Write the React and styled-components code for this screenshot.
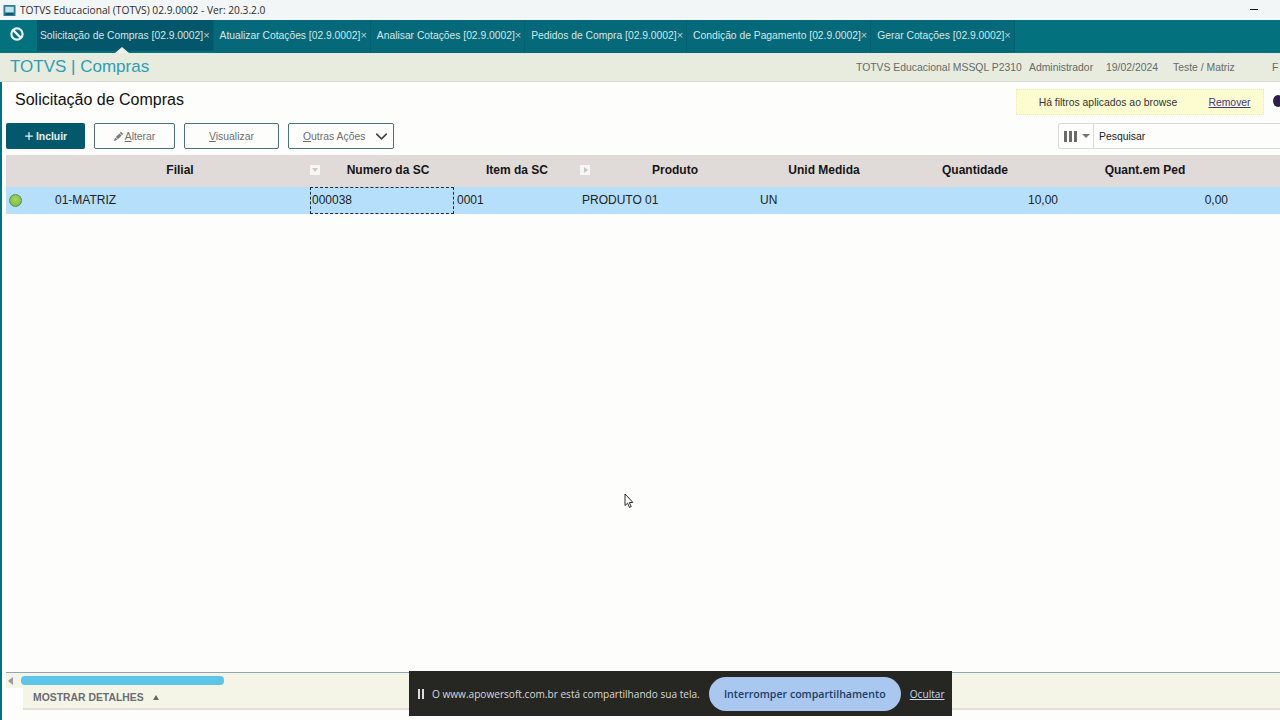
import React from "react";
import styled, { createGlobalStyle } from "styled-components";
import { BsPencilFill } from "react-icons/bs";
import { FaPlus } from "react-icons/fa6";
import { IoChevronDown } from "react-icons/io5";

const Global = createGlobalStyle`
  html, body { margin: 0; padding: 0; height: 100%; overflow: hidden; background: #fdfdfb; }
  #root { height: 100%; }
  * { box-sizing: border-box; }
`;

const tabs = [
  { label: "Solicitação de Compras [02.9.0002]", width: 172, active: true, pad: 6 },
  { label: "Atualizar Cotações [02.9.0002]", width: 153, pad: 2 },
  { label: "Analisar Cotações [02.9.0002]", width: 150, pad: 0 },
  { label: "Pedidos de Compra [02.9.0002]", width: 158, pad: 0 },
  { label: "Condição de Pagamento [02.9.0002]", width: 178, pad: 0 },
  { label: "Gerar Cotações [02.9.0002]", width: 139, pad: 0 },
];

const columns = [
  { label: "", width: 44 },
  { label: "Filial", width: 260 },
  { label: "Numero da SC", width: 144, shift: 12, sort: "down" },
  { label: "Item da SC", width: 126 },
  { label: "Produto", width: 178, shift: 12, sort: "right" },
  { label: "Unid Medida", width: 132 },
  { label: "Quantidade", width: 170 },
  { label: "Quant.em Ped", width: 170 },
];

const App = () => {
  return (
    <React.Fragment>
      <Global />
      <Page>
        <TitleBar>
          <AppIcon viewBox="0 0 14 14">
            <rect x="0.5" y="1" width="13" height="12" rx="1" fill="#2f7f97" />
            <rect x="2.5" y="3" width="9" height="6" fill="#bfe3ea" />
            <rect x="2.5" y="10" width="9" height="1.5" fill="#123f52" />
          </AppIcon>
          <TitleText>TOTVS Educacional (TOTVS) 02.9.0002 - Ver: 20.3.2.0</TitleText>
          <WindowMinimize />
        </TitleBar>

        <TabBar>
          <HomeIcon viewBox="0 0 16 16">
            <circle cx="8" cy="8" r="5.6" fill="none" stroke="#eef6f5" strokeWidth="2.2" />
            <path d="M4.4 4.4 L11.6 11.6" stroke="#eef6f5" strokeWidth="2.2" />
          </HomeIcon>
          {tabs.map((tab) => (
            <Tab key={tab.label} $width={tab.width} $active={tab.active} $pad={tab.pad}>
              <TabLabel>{tab.label}</TabLabel>
              <TabClose>×</TabClose>
            </Tab>
          ))}
        </TabBar>

        <InfoBar>
          <Brand>TOTVS | Compras</Brand>
          <InfoItems>
            <InfoItem $width={173}>TOTVS Educacional MSSQL P2310</InfoItem>
            <InfoItem $width={77}>Administrador</InfoItem>
            <InfoItem $width={67}>19/02/2024</InfoItem>
            <InfoItem $width={99}>Teste / Matriz</InfoItem>
            <InfoItem $width={8}>F</InfoItem>
          </InfoItems>
        </InfoBar>

        <Body>
          <Stripe />
          <Main>
            <TitleRow>
              <PageTitle>Solicitação de Compras</PageTitle>
              <FilterNotice>
                <FilterText>Há filtros aplicados ao browse</FilterText>
                <RemoveLink>Remover</RemoveLink>
              </FilterNotice>
              <CutDot />
            </TitleRow>

            <Toolbar>
              <PrimaryButton>
                <FaPlus size={10} />
                <span>Incluir</span>
              </PrimaryButton>
              <ActionButton $width={81}>
                <BsPencilFill size={9} color="#777" />
                <span><u>A</u>lterar</span>
              </ActionButton>
              <ActionButton $width={95}>
                <span><u>V</u>isualizar</span>
              </ActionButton>
              <ActionButton $width={106} $between>
                <span><u>O</u>utras Ações</span>
                <IoChevronDown size={17} color="#444" />
              </ActionButton>
              <SearchBox>
                <ColumnsButton>
                  <ColumnBars>
                    <i /><i /><i />
                  </ColumnBars>
                  <Caret />
                </ColumnsButton>
                <SearchInput placeholder="Pesquisar" />
              </SearchBox>
            </Toolbar>

            <HeaderRow>
              {columns.map((col) => (
                <HeadCell key={col.label + col.width} $width={col.width} $shift={col.shift}>
                  {col.sort && <SortMark $dir={col.sort} />}
                  {col.label}
                </HeadCell>
              ))}
            </HeaderRow>

            <DataRow>
              <StatusCell><StatusDot /></StatusCell>
              <DataCell $width={260} $pad={5}>01-MATRIZ</DataCell>
              <FocusCell>000038</FocusCell>
              <DataCell $width={126} $pad={3}>0001</DataCell>
              <DataCell $width={178} $pad={2}>PRODUTO 01</DataCell>
              <DataCell $width={132} $pad={2}>UN</DataCell>
              <DataCell $width={170} $right $pad={2}>10,00</DataCell>
              <DataCell $width={170} $right $pad={2}>0,00</DataCell>
            </DataRow>

            <Spacer />

            <Cursor viewBox="0 0 10 16">
              <path d="M1 1 L1 12.5 L3.6 10.2 L5.4 14.4 L7.2 13.6 L5.4 9.6 L8.8 9.4 Z" fill="#fff" stroke="#111" strokeWidth="0.9" />
            </Cursor>

            <ScrollRow>
              <ScrollArrow />
              <ScrollThumb />
            </ScrollRow>
            <DetailsBar>
              <DetailsLabel>MOSTRAR DETALHES</DetailsLabel>
              <DetailsCaret />
            </DetailsBar>
          </Main>
        </Body>

        <ShareBar>
          <PauseMark />
          <ShareText>O www.apowersoft.com.br está compartilhando sua tela.</ShareText>
          <StopButton>Interromper compartilhamento</StopButton>
          <HideLink>Ocultar</HideLink>
        </ShareBar>
      </Page>
    </React.Fragment>
  );
};

const Page = styled.div`
  position: relative;
  display: flex;
  flex-direction: column;
  width: 1280px;
  height: 720px;
  overflow: hidden;
  font-family: "Liberation Sans", Arial, sans-serif;
  background: #fdfdfb;
`;

const TitleBar = styled.div`
  display: flex;
  align-items: center;
  flex: 0 0 20px;
  padding: 0 22px 0 3px;
  background: #f3f6f6;
`;

const AppIcon = styled.svg`
  width: 13px;
  height: 13px;
  margin-right: 4px;
`;

const TitleText = styled.span`
  flex: 1;
  font-family: "Open Sans", sans-serif;
  font-size: 10.2px;
  color: #2b2b2b;
  white-space: nowrap;
`;

const WindowMinimize = styled.span`
  width: 8px;
  height: 1px;
  margin-bottom: 1px;
  background: #111;
`;

const TabBar = styled.div`
  display: flex;
  align-items: stretch;
  flex: 0 0 33px;
  padding-left: 2px;
  background: #04717f;
`;

const HomeIcon = styled.svg`
  flex: 0 0 16px;
  width: 16px;
  height: 16px;
  margin: 6px 12px 0 7px;
`;

const Tab = styled.div`
  position: relative;
  display: flex;
  align-items: center;
  justify-content: space-between;
  flex: 0 0 ${(p) => p.$width}px;
  height: ${(p) => (p.$active ? "31px" : "100%")};
  padding: ${(p) => (p.$active ? "0 3px 0 3px" : "0 3px 2px 6px")};
  background: ${(p) => (p.$active ? "#04566b" : "#05697a")};
  border-right: 1px solid #04606f;

  ${(p) =>
    p.$active &&
    `
    &::after {
      content: "";
      position: absolute;
      left: 78px;
      bottom: -2px;
      border-left: 7px solid transparent;
      border-right: 7px solid transparent;
      border-bottom: 6px solid #eef2ea;
    }
  `}
`;

const TabLabel = styled.span`
  font-size: 10.3px;
  color: #d6e6e6;
  white-space: nowrap;
`;

const TabClose = styled.span`
  font-size: 11px;
  line-height: 1;
  color: #b5d0d2;
`;

const InfoBar = styled.div`
  display: flex;
  align-items: center;
  justify-content: space-between;
  flex: 0 0 29px;
  padding: 0 0 0 10px;
  background: #e7ecdf;
  border-bottom: 1px solid #d8dad8;
`;

const Brand = styled.div`
  font-size: 17px;
  color: #2f9db5;
`;

const InfoItems = styled.div`
  display: flex;
  transform: translateX(0);
`;

const InfoItem = styled.span`
  flex: 0 0 ${(p) => p.$width}px;
  font-size: 10.4px;
  color: #666a68;
  white-space: nowrap;
`;

const Body = styled.div`
  display: flex;
  flex: 1;
  min-height: 0;
`;

const Stripe = styled.div`
  flex: 0 0 2px;
  background: #04717f;
`;

const Main = styled.div`
  position: relative;
  display: flex;
  flex-direction: column;
  flex: 1;
  min-width: 0;
  padding-left: 4px;
`;

const TitleRow = styled.div`
  display: flex;
  align-items: flex-start;
  flex: 0 0 41px;
  padding: 7px 0 0 9px;
`;

const PageTitle = styled.h1`
  flex: 1;
  margin: 0;
  font-size: 16px;
  line-height: 21px;
  font-weight: 400;
  color: #111;
`;

const FilterNotice = styled.div`
  display: flex;
  align-items: center;
  width: 248px;
  height: 26px;
  background: #fdfcd0;
  border: 1px dotted #ecebb5;
`;

const FilterText = styled.span`
  flex: 0 0 179px;
  text-align: center;
  padding-left: 3px;
  font-size: 10.4px;
  color: #333;
`;

const RemoveLink = styled.a`
  flex: 1;
  text-align: center;
  font-size: 10.4px;
  color: #3a3a8c;
  text-decoration: underline;
`;

const CutDot = styled.span`
  width: 10px;
  height: 12px;
  margin: 6px -3px 0 9px;
  border-radius: 50%;
  background: #2d1f4e;
`;

const Toolbar = styled.div`
  display: flex;
  align-items: center;
  flex: 0 0 26px;
  margin-bottom: 6px;
  gap: 9px;
`;

const PrimaryButton = styled.div`
  display: flex;
  align-items: center;
  justify-content: center;
  gap: 2px;
  width: 79px;
  height: 26px;
  border-radius: 2px;
  background: #04586c;
  color: #e6f1f2;
  font-size: 10.4px;
  font-weight: 700;
`;

const ActionButton = styled.div`
  display: flex;
  align-items: center;
  justify-content: ${(p) => (p.$between ? "space-between" : "center")};
  gap: 2px;
  width: ${(p) => p.$width}px;
  height: 26px;
  padding: ${(p) => (p.$between ? "0 3px 0 14px" : "0")};
  border: 1px solid #4d7279;
  border-radius: 2px;
  background: #fdfdfb;
  color: #6d6f70;
  font-size: 10.4px;
`;

const SearchBox = styled.div`
  display: flex;
  align-items: center;
  height: 26px;
  margin-left: auto;
  width: 223px;
  margin-right: -1px;
  border: 1px solid #dcdcdc;
  border-right: none;
  border-radius: 3px 0 0 3px;
`;

const ColumnsButton = styled.div`
  display: flex;
  align-items: center;
  gap: 5px;
  width: 35px;
  height: 100%;
  padding-left: 5px;
  border-right: 1px solid #dcdcdc;
`;

const ColumnBars = styled.div`
  display: flex;
  gap: 2px;

  i {
    display: block;
    width: 3px;
    height: 11px;
    background: #6a6a6a;
  }
`;

const Caret = styled.span`
  border-left: 4px solid transparent;
  border-right: 4px solid transparent;
  border-top: 4px solid #777;
`;

const SearchInput = styled.input`
  flex: 1;
  min-width: 0;
  height: 100%;
  padding: 0 0 0 5px;
  border: none;
  outline: none;
  background: transparent;
  font-family: "Liberation Sans", Arial, sans-serif;
  font-size: 10.4px;

  &::placeholder {
    color: #222;
    opacity: 1;
  }
`;

const HeaderRow = styled.div`
  display: flex;
  flex: 0 0 32px;
  background: #e0dbd9;
`;

const HeadCell = styled.div`
  position: relative;
  flex: 0 0 ${(p) => p.$width}px;
  padding-left: ${(p) => p.$shift || 0}px;
  text-align: center;
  font-size: 12px;
  line-height: 30px;
  font-weight: 700;
  color: #151515;
  white-space: nowrap;
`;

const SortMark = styled.span`
  position: absolute;
  left: ${(p) => (p.$dir === "down" ? "0" : "0")};
  top: 10px;
  width: 10px;
  height: 10px;
  background: #f6f6f2;

  &::after {
    content: "";
    position: absolute;
    ${(p) =>
      p.$dir === "down"
        ? `
      left: 2px;
      top: 3px;
      border-left: 3px solid transparent;
      border-right: 3px solid transparent;
      border-top: 4px solid #c9c9c9;
    `
        : `
      left: 4px;
      top: 2px;
      border-top: 3px solid transparent;
      border-bottom: 3px solid transparent;
      border-left: 4px solid #c4c4d2;
    `}
  }
`;

const DataRow = styled.div`
  display: flex;
  align-items: stretch;
  flex: 0 0 27px;
  background: #b6dffb;
`;

const StatusCell = styled.div`
  display: flex;
  align-items: center;
  flex: 0 0 44px;
  padding-left: 3px;
`;

const StatusDot = styled.span`
  width: 13px;
  height: 13px;
  border-radius: 50%;
  border: 1px solid #5f8f57;
  background: radial-gradient(circle at 50% 40%, #a7da5c, #6db33f);
`;

const DataCell = styled.div`
  flex: 0 0 ${(p) => p.$width}px;
  padding: 0 ${(p) => (p.$right ? p.$pad : 0)}px 0 ${(p) => (p.$right ? 0 : p.$pad)}px;
  text-align: ${(p) => (p.$right ? "right" : "left")};
  font-size: 12px;
  line-height: 26px;
  color: #222;
`;

const FocusCell = styled.div`
  flex: 0 0 144px;
  padding-left: 1px;
  border: 1px dashed #20303a;
  font-size: 12px;
  line-height: 25px;
  color: #222;
`;

const Spacer = styled.div`
  flex: 1;
`;

const Cursor = styled.svg`
  position: absolute;
  left: 622px;
  top: 411px;
  width: 10px;
  height: 16px;
`;

const ScrollRow = styled.div`
  display: flex;
  align-items: center;
  flex: 0 0 16px;
  padding-left: 2px;
  border-top: 1px solid #8fa4b5;
  background: #f4f5e6;
`;

const ScrollArrow = styled.span`
  margin-right: 8px;
  border-top: 4px solid transparent;
  border-bottom: 4px solid transparent;
  border-right: 5px solid #9b9b9b;
`;

const ScrollThumb = styled.span`
  width: 203px;
  height: 9px;
  border-radius: 4px;
  background: #5cc6e8;
`;

const DetailsBar = styled.div`
  display: flex;
  align-items: center;
  flex: 0 0 22px;
  margin: 0 0 10px 17px;
  padding: 0 0 1px 10px;
  background: #f4f5e6;
  border-bottom: 2px solid #dfe0d6;
`;

const DetailsLabel = styled.span`
  font-size: 10.4px;
  font-weight: 700;
  color: #6c6c74;
`;

const DetailsCaret = styled.span`
  margin-left: 9px;
  border-left: 3.5px solid transparent;
  border-right: 3.5px solid transparent;
  border-bottom: 5px solid #666;
`;

const ShareBar = styled.div`
  position: absolute;
  left: 409px;
  top: 671px;
  display: flex;
  align-items: center;
  width: 543px;
  height: 45px;
  padding-left: 9px;
  background: #262623;
`;

const PauseMark = styled.span`
  width: 6px;
  height: 10px;
  margin-right: 8px;
  border-left: 2px solid #ddd;
  border-right: 2px solid #ddd;
`;

const ShareText = styled.span`
  font-family: "Open Sans", sans-serif;
  font-size: 10.1px;
  color: #d8d8d8;
  white-space: nowrap;
`;

const StopButton = styled.div`
  display: flex;
  align-items: center;
  justify-content: center;
  width: 192px;
  height: 34px;
  margin-left: 9px;
  border-radius: 17px;
  background: #a9c7ef;
  font-family: "Open Sans", sans-serif;
  font-size: 10.6px;
  font-weight: 600;
  color: #1d3d68;
  white-space: nowrap;
`;

const HideLink = styled.a`
  margin-left: 9px;
  font-family: "Open Sans", sans-serif;
  font-size: 10.1px;
  color: #c8d8ee;
  text-decoration: underline;
`;

export default App;
